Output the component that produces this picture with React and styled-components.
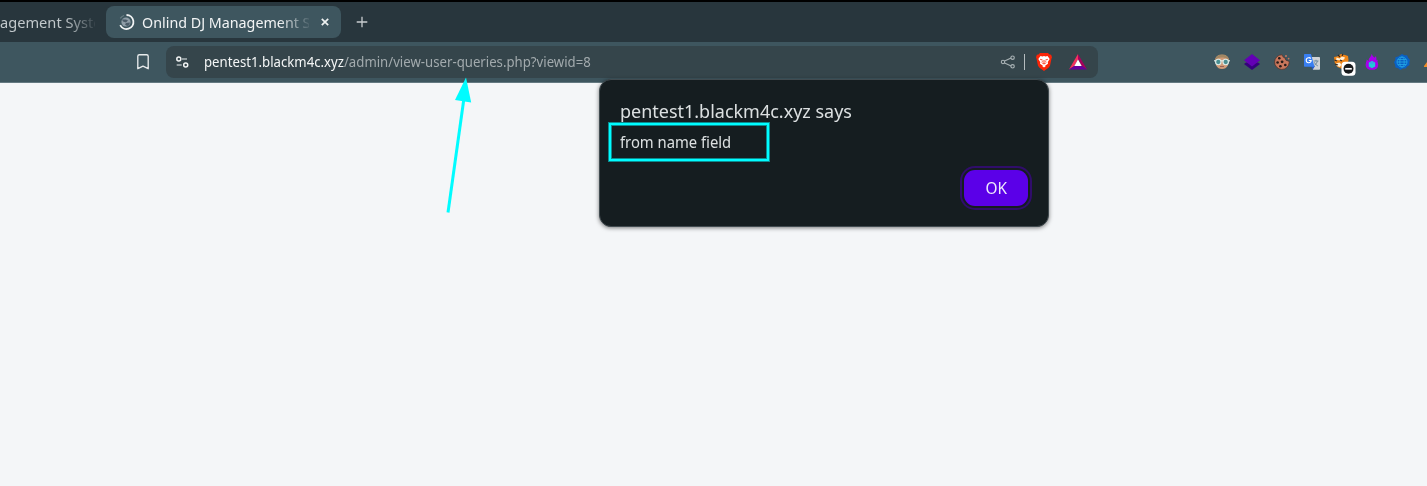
import React from "react";
import styled, { createGlobalStyle } from "styled-components";

const GlobalStyle = createGlobalStyle`
  * { box-sizing: border-box; }
  body { margin: 0; background: #f4f6f8; overflow: hidden; font-family: "Noto Sans", sans-serif; }
  svg { display: block; flex: none; }
`;

const Browser = styled.div`
  position: relative;
  width: 1427px;
  height: 486px;
  overflow: hidden;
  display: flex;
  flex-direction: column;
  background: #f4f6f8;
`;

const Label = styled.span`
  display: inline-block;
  white-space: nowrap;
  transform: scaleX(${(p) => p.$stretch});
  transform-origin: ${(p) => p.$origin || "left"} center;
`;

const TabStrip = styled.div`
  height: 42px;
  border-top: 2px solid #000;
  background: #28363d;
  display: flex;
  align-items: center;
  flex: none;
`;

const TabTitle = styled.div`
  width: ${(p) => p.$width}px;
  flex: none;
  white-space: nowrap;
  font-size: 15px;
  line-height: 20px;
  color: ${(p) => p.$color};
  mask-image: linear-gradient(to right, #000 ${(p) => p.$width - 30}px, transparent ${(p) => p.$width + 3}px);
`;

const InactiveTab = styled.div`
  width: 106px;
  display: flex;
`;

const ActiveTab = styled.div`
  width: 235px;
  height: 32px;
  border-radius: 8px;
  background: #3e565f;
  display: flex;
  align-items: center;
  padding-left: 12px;
`;

const TabIcon = styled.div`
  width: 24px;
`;

const CloseButton = styled.div`
  margin-left: 12px;
`;

const NewTab = styled.div`
  margin-left: 15px;
`;

const Toolbar = styled.div`
  height: 41px;
  flex: none;
  background: #3e565f;
  border-bottom: 1px solid #647981;
  display: flex;
  align-items: center;
  padding-left: 136px;
`;

const AddressBar = styled.div`
  flex: none;
  margin-left: 16px;
  width: 932px;
  height: 32px;
  border-radius: 8px;
  background: #35454b;
  display: flex;
  align-items: center;
  padding: 0 11px 0 9px;
`;

const Url = styled.div`
  flex: 1;
  margin-left: 14px;
  font-size: 13.6px;
  line-height: 20px;
  white-space: nowrap;
  color: #a2aaad;
`;

const Host = styled.span`
  color: #f4f6f6;
`;

const Divider = styled.div`
  width: 1px;
  height: 16px;
  margin: 0 11px 0 8px;
  background: #b5bcbe;
`;

const Shields = styled.div`
  margin-right: 17px;
`;

const Extensions = styled.div`
  flex: none;
  display: flex;
  align-items: center;
  gap: 12px;
  margin-left: 115px;
`;

const Dialog = styled.div`
  position: absolute;
  left: 599px;
  top: 79px;
  width: 450px;
  height: 148px;
  border: 1px solid #414b50;
  border-radius: 12px;
  background: #151d20;
  box-shadow: 0 1px 4px rgba(0, 0, 0, 0.5);
  padding: 18px 20px;
  color: #dce0e1;
  display: flex;
  flex-direction: column;
`;

const DialogTitle = styled.div`
  font-size: 18.8px;
  line-height: 27px;
`;

const DialogMessage = styled.div`
  margin-top: 7px;
  font-size: 15.5px;
  line-height: 20px;
`;

const OkButton = styled.button`
  align-self: flex-end;
  margin-top: 18px;
  width: 64px;
  height: 36px;
  padding: 0;
  border: 0;
  border-radius: 11px;
  background: #5b00e8;
  box-shadow: 0 0 0 2px #151d20, 0 0 0 4px #300d6b;
  color: #eee8fc;
  font: 16px/35px "Noto Sans", sans-serif;
`;

const Highlight = styled.div`
  position: absolute;
  left: 609px;
  top: 123px;
  width: 160px;
  height: 38px;
  border: 2px solid #00fcff;
  box-shadow: 0 0 0 1px rgba(0, 252, 255, 0.5), inset 0 0 0 1px rgba(0, 252, 255, 0.5);
`;

const Pointer = styled.svg`
  position: absolute;
  left: 440px;
  top: 76px;
`;

const LoadingIcon = () => (
  <svg width="17" height="18" viewBox="0 0 17 18" fill="none">
    <path d="M8.5 2A7 7 0 1 1 2.2 12.2" stroke="#f2f4f5" strokeWidth="1.8" />
    <path d="M2.3 5.4A7 7 0 0 1 6 2.5" stroke="#697d84" strokeWidth="1.3" />
    <circle cx="8" cy="9" r="4.6" fill="#8f9da7" />
    <path d="M4 6.5h4l2 1-2 2-3-1zM8 10l4-.5-1 3-2 .4-2-1.4z" fill="#4c5c69" />
  </svg>
);

const BookmarkIcon = () => (
  <svg width="14" height="18" viewBox="0 0 14 18" fill="none" stroke="#e7ebec" strokeWidth="1.35" strokeLinejoin="round">
    <path d="M3.4 1.7h7.2q1.6 0 1.6 1.6v12.4L7 13.1l-5.2 2.6V3.3q0-1.6 1.6-1.6Z" />
  </svg>
);

const SettingsIcon = () => (
  <svg width="15" height="14" viewBox="0 0 15 14" fill="none" strokeWidth="1.5">
    <path d="M7 4h5M1.7 10h5" stroke="#aeb8bb" />
    <circle cx="3.8" cy="4" r="2" stroke="#f2f4f4" />
    <circle cx="10.7" cy="10" r="2" stroke="#f2f4f4" />
  </svg>
);

const ShareIcon = () => (
  <svg width="16" height="16" viewBox="0 0 16 16" fill="none" stroke="#a9b2b5" strokeWidth="1.1">
    <path d="m4.6 7.1 6.5-3M4.6 8.9l6.5 3" />
    <circle cx="3" cy="8" r="1.7" />
    <circle cx="12.6" cy="3.7" r="1.7" />
    <circle cx="12.6" cy="12.3" r="1.7" />
  </svg>
);

const LionIcon = () => (
  <svg width="16" height="18" viewBox="0 0 16 18">
    <path d="M4 0h8l1.5 1.5 1.6.2.9 2.5-.5 1.4-1.5 7.2-1.5 2L8 18l-4.5-3.2-1.5-2L.5 5.6 0 4.2l.9-2.5 1.6-.2Z" fill="#fb2508" />
    <path d="m4.5 3 2 .5L8 3l1.5.5 2-.5 2.2 3.1-1.9 3 .2 1.6-2.2 1.6L8 13.5l-1.8-1.2L4 10.7l.2-1.6-1.9-3Z" fill="#fff" />
    <path d="m4.2 6.3 2.4.8M11.8 6.3l-2.4.8M8 7v3.4M6.2 10 8 11l1.8-1M6.5 8.3l-.8 1M9.5 8.3l.8 1" stroke="#fb2508" strokeWidth="0.9" fill="none" />
    <path d="m6.1 13.1 1.9-.9 1.9.9L8 14.5Z" fill="#fff" />
  </svg>
);

const TriangleIcon = () => (
  <svg width="18" height="16" viewBox="0 0 18 16">
    <path d="M9 0v5.5L5.3 12 0 15.5Z" fill="#f4325e" />
    <path d="m9 0 9 15.5-5.3-3.5L9 5.5Z" fill="#a7005e" />
    <path d="M0 15.5 5.3 12h7.4l5.3 3.5Z" fill="#67009e" />
    <path d="M9 5.5 12.7 12H5.3Z" fill="#fff" />
  </svg>
);

const FaceIcon = () => (
  <svg width="18" height="18" viewBox="0 0 18 18">
    <path d="M2 7.5Q2.2 1.7 9 1.7t7 5.8l-1.2 5Q13 16 9 16t-5.8-3.5Z" fill="#d29b78" />
    <path d="M2.3 7Q3 1.5 9 1.5T15.7 7q-3-3-6.7-2.4Q5.3 4 2.3 7Z" fill="#a28763" />
    <path d="M1 7.8h16" stroke="#dcebe8" strokeWidth="1.2" />
    <circle cx="5.3" cy="9" r="2.7" fill="#498e91" stroke="#dcebe8" strokeWidth="1.1" />
    <circle cx="12.7" cy="9" r="2.7" fill="#498e91" stroke="#dcebe8" strokeWidth="1.1" />
    <path d="M7 13.5h4" stroke="#986257" />
  </svg>
);

const LayersIcon = () => (
  <svg width="18" height="18" viewBox="0 0 18 18">
    <path d="m1 11 2-1.5h12l2 1.5-8 6Z" fill="#36007d" />
    <path d="m9 1 8 6.3-8 6.2-8-6.2Z" fill="#6300b5" />
  </svg>
);

const CookieIcon = () => (
  <svg width="18" height="18" viewBox="0 0 18 18">
    <path d="M9 1.8Q10 5 12 5q0 3 4 3.2l.2 1.2A7.3 7.3 0 1 1 9 1.8Z" fill="#c8775c" stroke="#522f28" strokeWidth=".7" />
    <g fill="#241b1a">
      <circle cx="6.3" cy="5.3" r="1.3" />
      <circle cx="4.6" cy="9.5" r="1.3" />
      <circle cx="9.1" cy="8.8" r="1.4" />
      <circle cx="7.4" cy="13.2" r="1.3" />
      <circle cx="12.3" cy="12" r="1.3" />
    </g>
    <g fill="#c8775c">
      <circle cx="13" cy="3" r="1" />
      <circle cx="15.6" cy="5.6" r=".9" />
    </g>
  </svg>
);

const TranslateIcon = () => (
  <svg width="18" height="18" viewBox="0 0 18 18">
    <path d="M8 4h8.2q.8 0 .8.8V16q0 .7-.8.7H10Z" fill="#d0d3d6" />
    <path d="M10.5 8h5M13 6.8V8m1.5 0q-.7 3-3.2 4.3M11.3 9.3q1 2.5 3.5 3.6" stroke="#718b9d" fill="none" />
    <path d="m8 13 4 .1-2.3 3.7Z" fill="#2458c5" />
    <path d="M1.8 1H8l3.5 12.8H1.8q-.8 0-.8-.8V1.8q0-.8.8-.8Z" fill="#397ff2" />
    <path d="M7.8 5.5Q6.8 4.5 5.5 4.7a2.5 2.5 0 1 0 2.7 2.8H5.8" fill="none" stroke="#fff" strokeWidth="1.1" />
  </svg>
);

const TigerIcon = () => (
  <svg width="18" height="18" viewBox="0 0 18 18" overflow="visible">
    <path d="m1 4 3-.5L8 1l4 1 3 1 .5 4-1 5-5 4-5-2-2.7-4Z" fill="#ef8518" />
    <path d="m3.5 4.5 3 1L9 3.500l3 1-1 2-3 1-4-.5-1 1.500Zm-.5 6 3.500-1 2 2-1.500 2.500-3-1Z" fill="#fff0d8" />
    <path d="m5 2 2 2M10 1 9 3M1.5 7 4 8M7 7l2 1M2 11l3 1" stroke="#332620" strokeWidth="1.2" />
    <rect x="8.5" y="8.8" width="14" height="14" rx="3.5" fill="#fff" />
    <circle cx="15.5" cy="15.8" r="5" fill="#17191b" />
    <path d="M12.2 15.8h6.6" stroke="#fff" strokeWidth="1.7" />
  </svg>
);

const FlameIcon = () => (
  <svg width="18" height="18" viewBox="0 0 18 18">
    <path d="M8.5.7q1 2.4 2.9 4 1.3-.8 1-2 1.5 1.7 1 4.5l1.4-.5q-.8 1.5.1 3.3 1.5 5-3.6 6.7H6.2Q1.5 14.5 3 9.4q.8-1.5.6-3l2 1.5q-.2-2.6 1.7-4Q8.6 2.5 8.5.7Z" fill="#a700ec" />
    <path d="m9 8 3.2 1.8v3.6L9 15.2l-3.200-1.800V9.800Z" fill="#20c9d7" />
    <path d="m9 8 3.200 1.800L9 11.600 5.800 9.800Z" fill="#36a8e3" />
  </svg>
);

const GlobeIcon = () => (
  <svg width="18" height="18" viewBox="0 0 18 18">
    <path d="m9 1 2.5 1.2 2.6.1 1 2.4L17 7l-.6 2.3.1 2.8-2.3 1.3-1.6 2.2-2.7-.1L7.2 17l-2-1.8-2.7-.8-.4-2.7L1 9.2l1.2-2.3.3-2.7 2.7-.8Z" fill="#0a60c4" />
    <g fill="none" stroke="#24a8e4" strokeWidth=".8">
      <circle cx="9" cy="9" r="5" />
      <ellipse cx="9" cy="9" rx="2.2" ry="5" />
      <path d="M4 9h10M5 6.5h8M5 11.5h8" />
    </g>
  </svg>
);

const EdgeIcon = () => (
  <svg width="18" height="18" viewBox="0 0 18 18">
    <path d="m1 13 3-4 4-1v6H1Z" fill="#ed8b27" />
  </svg>
);

export default function App() {
  return (
    <Browser>
      <GlobalStyle />
      <TabStrip>
        <InactiveTab>
          <TabTitle $width={95} $color="#c1c8cb"><Label $stretch={0.975}>agement Syste</Label></TabTitle>
        </InactiveTab>
        <ActiveTab>
          <TabIcon><LoadingIcon /></TabIcon>
          <TabTitle $width={167} $color="#f2f4f5"><Label $stretch={0.953}>Onlind DJ Management S</Label></TabTitle>
          <CloseButton>
            <svg width="8" height="8" viewBox="0 0 8 8"><path d="m.8.8 6.4 6.4m0-6.4L.8 7.2" stroke="#edf1f1" strokeWidth="1.7" /></svg>
          </CloseButton>
        </ActiveTab>
        <NewTab>
          <svg width="12" height="12" viewBox="0 0 12 12"><path d="M6 .7v10.6M.7 6h10.6" stroke="#c8cdcf" strokeWidth="1.3" /></svg>
        </NewTab>
      </TabStrip>
      <Toolbar>
        <BookmarkIcon />
        <AddressBar>
          <SettingsIcon />
          <Url>
            <Label $stretch={0.97}><Host>pentest1.blackm4c.xyz</Host>/admin/view-user-queries.php?viewid=8</Label>
          </Url>
          <ShareIcon />
          <Divider />
          <Shields><LionIcon /></Shields>
          <TriangleIcon />
        </AddressBar>
        <Extensions>
          <FaceIcon />
          <LayersIcon />
          <CookieIcon />
          <TranslateIcon />
          <TigerIcon />
          <FlameIcon />
          <GlobeIcon />
          <EdgeIcon />
        </Extensions>
      </Toolbar>
      <Dialog>
        <DialogTitle><Label $stretch={0.957}>pentest1.blackm4c.xyz says</Label></DialogTitle>
        <DialogMessage><Label $stretch={0.955}>from name field</Label></DialogMessage>
        <OkButton><Label $stretch={0.96} $origin="center">OK</Label></OkButton>
      </Dialog>
      <Highlight />
      <Pointer width="40" height="140" viewBox="0 0 40 140">
        <path d="M8 136.5 24 22" stroke="#00fcff" strokeWidth="3" />
        <path d="m26 1.5 5.2 25L15 24Z" fill="#00fcff" />
      </Pointer>
    </Browser>
  );
}
